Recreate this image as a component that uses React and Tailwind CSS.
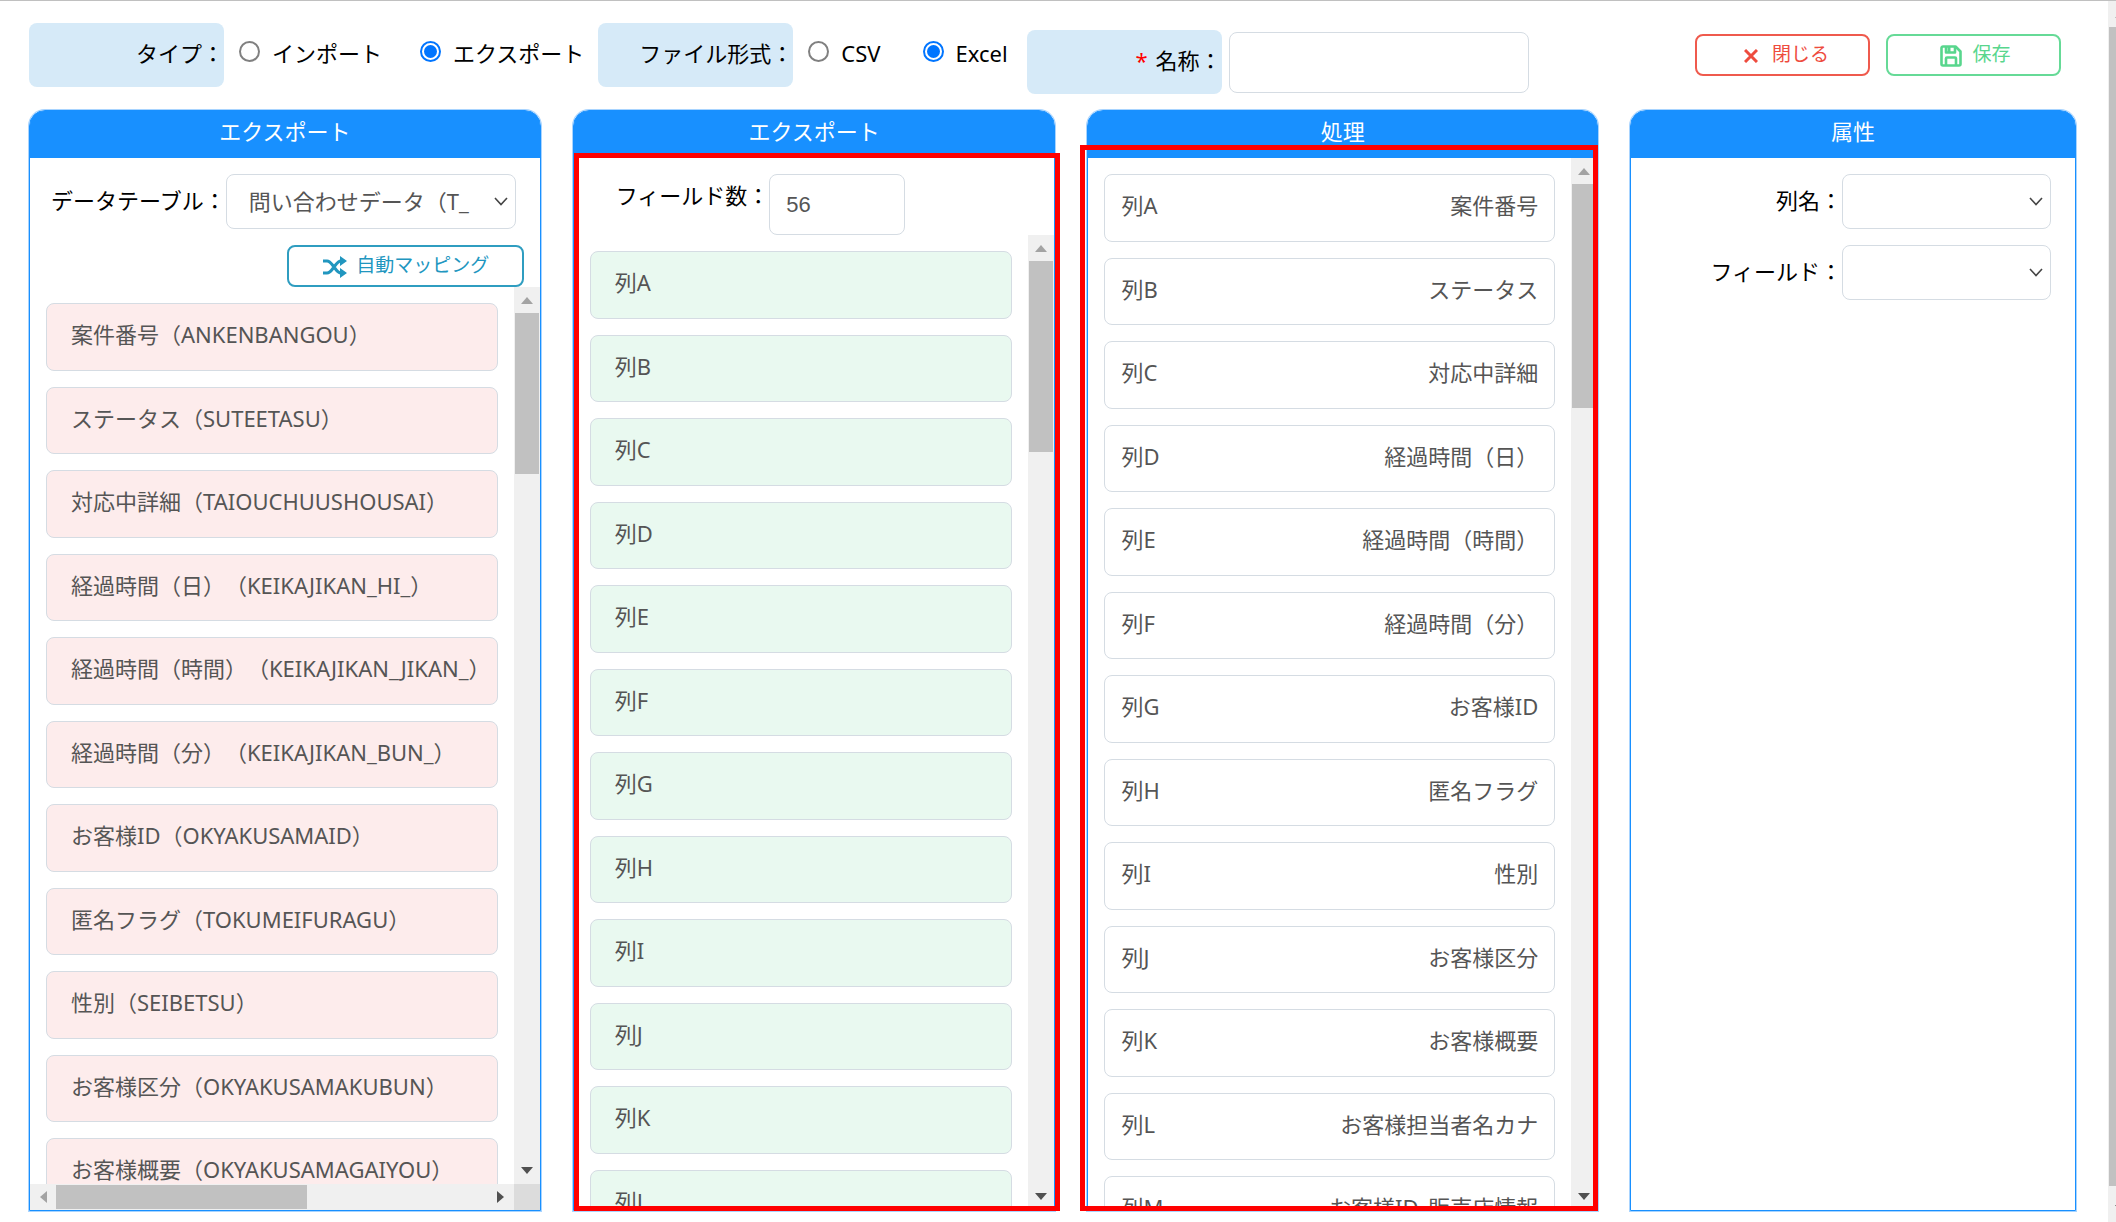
import { useState } from 'react';

const dataFields = [
  '案件番号（ANKENBANGOU）',
  'ステータス（SUTEETASU）',
  '対応中詳細（TAIOUCHUUSHOUSAI）',
  '経過時間（日）（KEIKAJIKAN_HI_）',
  '経過時間（時間）（KEIKAJIKAN_JIKAN_）',
  '経過時間（分）（KEIKAJIKAN_BUN_）',
  'お客様ID（OKYAKUSAMAID）',
  '匿名フラグ（TOKUMEIFURAGU）',
  '性別（SEIBETSU）',
  'お客様区分（OKYAKUSAMAKUBUN）',
  'お客様概要（OKYAKUSAMAGAIYOU）',
];

const columns = ['列A', '列B', '列C', '列D', '列E', '列F', '列G', '列H', '列I', '列J', '列K', '列L'];

const mappings = [
  { column: '列A', field: '案件番号' },
  { column: '列B', field: 'ステータス' },
  { column: '列C', field: '対応中詳細' },
  { column: '列D', field: '経過時間（日）' },
  { column: '列E', field: '経過時間（時間）' },
  { column: '列F', field: '経過時間（分）' },
  { column: '列G', field: 'お客様ID' },
  { column: '列H', field: '匿名フラグ' },
  { column: '列I', field: '性別' },
  { column: '列J', field: 'お客様区分' },
  { column: '列K', field: 'お客様概要' },
  { column: '列L', field: 'お客様担当者名カナ' },
  { column: '列M', field: 'お客様ID_販売店情報' },
];

const cardClass = 'rounded-lg border border-[#d5dce3] pt-[14px] leading-[33px] whitespace-nowrap text-[#555]';

function Arrow({ direction, muted }) {
  const points = {
    up: '7,17 13,10 19,17',
    down: '7,9 19,9 13,16',
    left: '17,7 10,13 17,19',
    right: '9,7 16,13 9,19',
  };
  return (
    <svg viewBox="0 0 26 26" className="h-[26px] w-[26px] shrink-0" aria-hidden="true">
      <polygon points={points[direction]} fill={muted ? '#a3a3a3' : '#505050'} />
    </svg>
  );
}

function VerticalBar({ thumb }) {
  return (
    <div className="flex w-[26px] shrink-0 flex-col bg-[#f0f0f0]">
      <Arrow direction="up" muted />
      <div className="min-h-0 flex-1 px-px">
        <div className={`bg-[#c1c1c1] ${thumb}`} />
      </div>
      <Arrow direction="down" />
    </div>
  );
}

function Panel({ title, children }) {
  return (
    <section className="relative flex min-h-0 min-w-0 flex-col rounded-t-2xl border border-[#1890ff] ring-1 ring-[#a8d4ff]">
      <h2 className="h-[47px] shrink-0 rounded-t-[14px] bg-[#1890ff] text-center leading-[41px] text-white">{title}</h2>
      {children}
    </section>
  );
}

function Select({ id, className, children }) {
  return (
    <div className={`relative ${className}`}>
      <select id={id} className="h-[55px] w-full appearance-none rounded-lg border border-[#d5dce3] bg-white pr-10 pl-[22px] text-[#555]">
        {children}
      </select>
      <svg viewBox="0 0 14 9" className="pointer-events-none absolute top-[23px] right-2 h-[9px] w-[14px]" fill="none" stroke="#444" strokeWidth="1.6" aria-hidden="true">
        <path d="M1 1l6 6.5L13 1" />
      </svg>
    </div>
  );
}

function RadioOption({ name, value, current, onChange, children }) {
  const checked = value === current;
  return (
    <label className="flex items-center gap-3 leading-[30px]">
      <input
        type="radio"
        name={name}
        value={value}
        checked={checked}
        onChange={() => onChange(value)}
        className={`mb-1 h-[21px] w-[21px] appearance-none rounded-full border-2 bg-clip-content p-[2px] ${checked ? 'border-[#0075ff] bg-[#0075ff]' : 'border-[#808080]'}`}
      />
      {children}
    </label>
  );
}

export default function App() {
  const [type, setType] = useState('export');
  const [format, setFormat] = useState('excel');
  const [name, setName] = useState('');
  const [fieldCount, setFieldCount] = useState('56');

  return (
    <div className="flex h-screen overflow-hidden border-t border-[#c0c0c0] bg-white font-['Noto_Sans','Noto_Sans_CJK_JP',sans-serif] text-[22px] text-black [text-spacing-trim:space-all]">
      <main className="flex min-w-0 flex-1 flex-col pr-8 pb-[11px] pl-[29px]">
        <header className="flex h-[109px] shrink-0 items-start pt-[22px]">
          <div role="radiogroup" aria-labelledby="type-label" className="flex">
            <span id="type-label" className="mr-[15px] h-16 w-[195px] rounded-lg bg-[#d6eaf8] text-right leading-[60px]">タイプ：</span>
            <div className="flex h-[60px] items-center gap-[38px]">
              <RadioOption name="type" value="import" current={type} onChange={setType}>インポート</RadioOption>
              <RadioOption name="type" value="export" current={type} onChange={setType}>エクスポート</RadioOption>
            </div>
          </div>
          <div role="radiogroup" aria-labelledby="format-label" className="ml-[14px] flex">
            <span id="format-label" className="mr-[15px] h-16 w-[195px] rounded-lg bg-[#d6eaf8] text-right leading-[60px]">ファイル形式：</span>
            <div className="flex h-[60px] items-center gap-[42px]">
              <RadioOption name="format" value="csv" current={format} onChange={setFormat}>CSV</RadioOption>
              <RadioOption name="format" value="excel" current={format} onChange={setFormat}>Excel</RadioOption>
            </div>
          </div>
          <div className="mt-[7px] ml-[19px] flex">
            <label htmlFor="name" className="mr-[7px] h-16 w-[195px] rounded-lg bg-[#d6eaf8] text-right leading-[60px]">
              <span className="mr-2 text-[#ff0000]">*</span>名称：
            </label>
            <input
              id="name"
              type="text"
              value={name}
              onChange={(e) => setName(e.target.value)}
              className="mt-[2px] h-[61px] w-[300px] rounded-lg border border-[#d5dce3] px-4 text-[#555]"
            />
          </div>
          <div className="mt-[11px] mr-[15px] ml-auto flex gap-4 text-[19px]">
            <button type="button" className="flex h-[42px] w-[175px] items-center justify-center gap-[14px] rounded-lg border-2 border-[#ef5a4d] pb-0.5 pl-2 text-[#ee4c3e]">
              <svg viewBox="0 0 14 14" className="mt-1 h-[14px] w-[14px]" fill="none" stroke="currentColor" strokeWidth="3" aria-hidden="true">
                <path d="M1 1l12 12M13 1L1 13" />
              </svg>
              閉じる
            </button>
            <button type="button" className="flex h-[42px] w-[175px] items-center justify-center gap-[10px] rounded-lg border-2 border-[#66da97] pb-0.5 pl-1 text-[#58d68d]">
              <svg viewBox="0 0 22 22" className="mt-1 h-[22px] w-[22px]" fill="none" stroke="currentColor" strokeWidth="2.6" strokeLinejoin="round" aria-hidden="true">
                <path d="M3 1.500h12.500l5 5v12.500a1.500 1.500 0 0 1-1.500 1.500H3A1.500 1.500 0 0 1 1.500 19V3A1.500 1.500 0 0 1 3 1.500z" />
                <path d="M6 2v5.500h9V2M6 20v-6.500a1 1 0 0 1 1-1h8a1 1 0 0 1 1 1V20" />
                <path d="M9 2v5" strokeWidth="3" />
              </svg>
              保存
            </button>
          </div>
        </header>

        <div className="grid min-h-0 flex-1 grid-cols-[512fr_483fr_511fr_446fr] grid-rows-[minmax(0,1fr)] gap-8">
          <Panel title="エクスポート">
            <div className="flex justify-end pt-4 pr-6">
              <label htmlFor="data-table" className="leading-[53px] whitespace-nowrap">データテーブル：</label>
              <Select id="data-table" className="w-[290px]">
                <option>問い合わせデータ（T_</option>
              </Select>
            </div>
            <div className="flex justify-end pt-4 pr-4">
              <button type="button" className="flex h-[42px] w-[237px] items-center justify-center gap-[9px] rounded-lg border-2 border-[#2f9dc0] pb-0.5 pl-0.5 text-[19px] text-[#2196bf]">
                <svg viewBox="0 0 24 22" className="mt-1 h-[22px] w-6" fill="none" stroke="currentColor" strokeWidth="3" aria-hidden="true">
                  <path d="M0 5h4c3 0 4 2 7 6s4 6 7 6h1M0 17h4c3 0 4-2 7-6s4-6 7-6h1" />
                  <path d="M17 0l7 5-7 5zM17 12l7 5-7 5z" fill="currentColor" stroke="none" />
                </svg>
                自動マッピング
              </button>
            </div>
            <div className="flex min-h-0 flex-1">
              <div className="min-w-0 flex-1 overflow-hidden px-4 pt-4">
                <ul className="grid h-[986px] grid-rows-12 gap-4">
                  {dataFields.map((field) => (
                    <li key={field} className={`${cardClass} bg-[#fdecec] pl-6`}>{field}</li>
                  ))}
                </ul>
              </div>
              <VerticalBar thumb="h-[161px]" />
            </div>
            <div className="flex h-[26px] shrink-0 bg-[#f0f0f0]">
              <Arrow direction="left" muted />
              <div className="flex-1 py-px">
                <div className="h-full w-[251px] bg-[#c1c1c1]" />
              </div>
              <Arrow direction="right" />
              <div className="w-[26px] bg-[#dcdcdc]" />
            </div>
          </Panel>

          <Panel title="エクスポート">
            <div className="flex pt-4 pl-[42px]">
              <label htmlFor="field-count" className="leading-[42px]">フィールド数：</label>
              <input
                id="field-count"
                type="text"
                value={fieldCount}
                onChange={(e) => setFieldCount(e.target.value)}
                className="h-[61px] w-[136px] rounded-lg border border-[#d5dce3] px-4 font-['Liberation_Sans',sans-serif] text-[#555]"
              />
            </div>
            <div className="flex min-h-0 flex-1">
              <div className="min-w-0 flex-1 overflow-hidden px-4 pt-4">
                <ul className="grid h-[986px] grid-rows-12 gap-4">
                  {columns.map((column) => (
                    <li key={column} className={`${cardClass} bg-[#e9f9f0] pl-6`}>{column}</li>
                  ))}
                </ul>
              </div>
              <VerticalBar thumb="h-[191px]" />
            </div>
            <div className="pointer-events-none absolute top-[42px] -right-1.5 -bottom-px left-0 border-[5px] border-[#ff0000]" />
          </Panel>

          <Panel title="処理">
            <div className="flex min-h-0 flex-1">
              <div className="min-w-0 flex-1 overflow-hidden px-4 pt-4">
                <ul className="grid h-[1070px] grid-rows-13 gap-4">
                  {mappings.map(({ column, field }) => (
                    <li key={column} className={`${cardClass} flex justify-between px-4`}>
                      <span>{column}</span>
                      <span>{field}</span>
                    </li>
                  ))}
                </ul>
              </div>
              <VerticalBar thumb="h-[224px]" />
            </div>
            <div className="pointer-events-none absolute top-[34px] -right-px -bottom-px -left-2 border-[5px] border-[#ff0000]" />
          </Panel>

          <Panel title="属性">
            <div className="flex flex-col gap-4 pt-4 pr-6">
              <div className="flex justify-end">
                <label htmlFor="column-name" className="leading-[53px]">列名：</label>
                <Select id="column-name" className="w-[209px]" />
              </div>
              <div className="flex justify-end">
                <label htmlFor="field" className="leading-[53px]">フィールド：</label>
                <Select id="field" className="w-[209px]" />
              </div>
            </div>
          </Panel>
        </div>
      </main>

      {/* window scrollbar, partly past the right edge */}
      <div className="flex w-2 shrink-0 overflow-hidden">
        <div className="flex w-[26px] shrink-0 flex-col bg-[#f0f0f0]">
          <Arrow direction="up" muted />
          <div className="mr-0.5 mb-[10px] ml-px flex-1 bg-[#c1c1c1]" />
          <Arrow direction="down" />
        </div>
      </div>
    </div>
  );
}
